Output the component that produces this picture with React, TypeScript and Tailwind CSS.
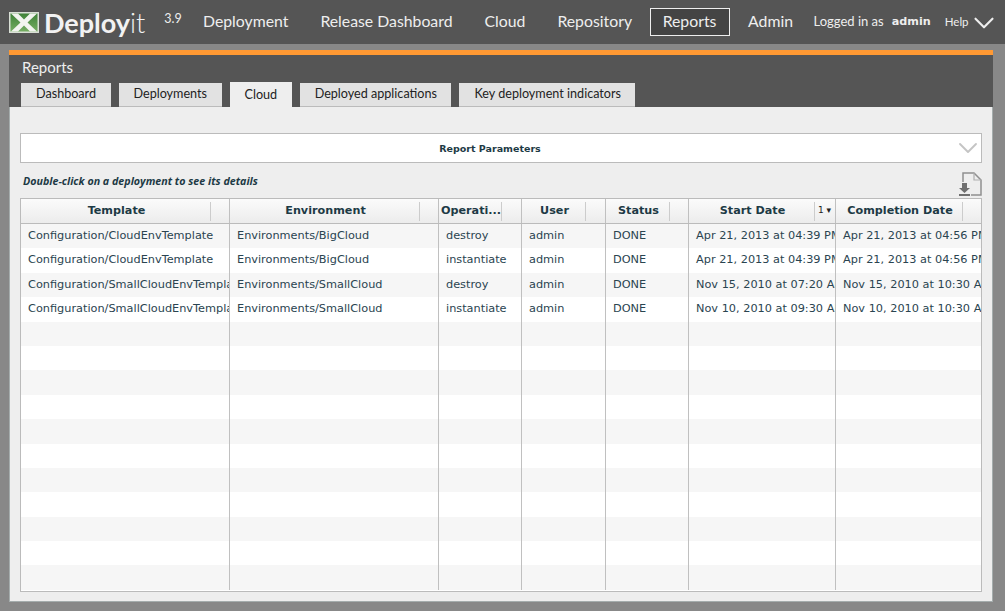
import React from 'react';
import { ChevronDown } from 'lucide-react';

const navItems = [
  { label: 'Deployment', className: 'mr-[32px]' },
  { label: 'Release Dashboard', className: 'mr-[32px]' },
  { label: 'Cloud', className: 'mr-[32px]' },
  { label: 'Repository', className: 'mr-[17.5px]' },
  { label: 'Reports', className: 'mr-[18.5px] flex h-[28px] w-[80px] items-center justify-center border border-[#eeeeee] bg-[#444444]' },
  { label: 'Admin', className: '' },
];
const tabs = ['Dashboard', 'Deployments', 'Cloud', 'Deployed applications', 'Key deployment indicators'];

const columns = [
  { label: 'Template', width: 'w-[209px]', handle: 'w-[190px]' },
  { label: 'Environment', width: 'w-[209px]', handle: 'w-[190px]' },
  { label: 'Operati...', width: 'w-[83px]', handle: 'w-[63px]' },
  { label: 'User', width: 'w-[84px]', handle: 'w-[64px]' },
  { label: 'Status', width: 'w-[83px]', handle: 'w-[64px]' },
  { label: 'Start Date', width: 'w-[147px]', handle: 'w-[126px]' },
  { label: 'Completion Date', width: 'w-[146px]', handle: 'w-[127px]' },
];

const rows = [
  ['Configuration/CloudEnvTemplate', 'Environments/BigCloud', 'destroy', 'admin', 'DONE', 'Apr 21, 2013 at 04:39 PM', 'Apr 21, 2013 at 04:56 PM'],
  ['Configuration/CloudEnvTemplate', 'Environments/BigCloud', 'instantiate', 'admin', 'DONE', 'Apr 21, 2013 at 04:39 PM', 'Apr 21, 2013 at 04:56 PM'],
  ['Configuration/SmallCloudEnvTemplate', 'Environments/SmallCloud', 'destroy', 'admin', 'DONE', 'Nov 15, 2010 at 07:20 AM', 'Nov 15, 2010 at 10:30 AM'],
  ['Configuration/SmallCloudEnvTemplate', 'Environments/SmallCloud', 'instantiate', 'admin', 'DONE', 'Nov 10, 2010 at 09:30 AM', 'Nov 10, 2010 at 10:30 AM'],
  ...Array.from({ length: 11 }, () => ['', '', '', '', '', '', '']),
];

const Logo = () => (
  <svg width="30" height="21" viewBox="0 0 30 21" className="shrink-0">
    <defs>
      <linearGradient id="logoGreen" x1="0" y1="0" x2="0" y2="1">
        <stop offset="0" stopColor="#3f8238" />
        <stop offset="1" stopColor="#75ad62" />
      </linearGradient>
    </defs>
    <rect width="30" height="21" fill="#d9dfd6" />
    <rect x="1.5" y="1.5" width="27" height="18" fill="url(#logoGreen)" />
    <path d="M2 1.5 H9 L15 7.5 L21 1.5 H28 L18.5 10.5 L28 19.5 H21 L15 13.5 L9 19.5 H2 L11.5 10.5 Z" fill="#f2f4ef" />
  </svg>
);

const ExportIcon = () => (
  <svg width="23" height="24" viewBox="0 0 23 24" fill="none">
    <path d="M4 10 V1 H15 L22 8 V23 H12" stroke="#909090" strokeWidth="1.5" />
    <path d="M15 1 V8 H22" stroke="#b0b0b0" strokeWidth="1.2" />
    <path d="M3 11 H8 V16 H11 L5.5 21 L0 16 H3 Z" fill="#6f6f6f" />
    <rect x="0" y="22" width="11" height="2" fill="#6f6f6f" />
  </svg>
);

export default function App() {
  return (
    <div className="h-[611px] w-[1005px] overflow-hidden bg-[#888888] font-['Lato',sans-serif]">
      {/* Top bar */}
      <header className="flex h-[44px] items-center bg-[#555555] text-[#eeeeee]">
        <div className="ml-[9px] flex w-[194px] items-center">
          <Logo />
          <span className="ml-[5px] text-[27px] leading-none font-bold text-[#f2f2f2]">
            Deploy<span className="font-light">it</span>
          </span>
          <span className="ml-[19px] -translate-y-[3px] text-[12.5px]">3.9</span>
        </div>
        <nav className="flex items-center text-[15.8px]">
          {navItems.map((item) => (
            <span key={item.label} className={item.className}>
              <span className="block -translate-y-[1px]">{item.label}</span>
            </span>
          ))}
        </nav>
        <span className="ml-[20.5px] text-[13px]">Logged in as</span>
        <span className="ml-[8px] font-['DejaVu_Sans',sans-serif] text-[11.2px] font-bold">admin</span>
        <span className="ml-[14px] text-[11.5px]">Help</span>
        <ChevronDown size={34} strokeWidth={1.5} className="-my-[8px] ml-[-2px] shrink-0 translate-y-[1px] text-[#eeeeee]" />
      </header>

      {/* Panel */}
      <div className="mx-[9px] mt-[6px] w-[984px]">
        <div className="h-[57px] border-t-[5px] border-[#ff9933] bg-[#555555]">
          <div className="flex h-[25px] items-center pl-[13px] text-[15px] text-[#eeeeee]">Reports</div>
          <div className="flex h-[27px] items-end gap-[8px] pl-[12px]">
            {tabs.map((tab) => (
              <div
                key={tab}
                className={
                  tab === 'Cloud'
                    ? 'flex h-[25px] items-center bg-[#eeeeee] pt-[2px] pr-[14.5px] pl-[15px] text-[12.6px] text-[#222222]'
                    : 'flex h-[24px] items-center border-b border-[#bbbbbb] bg-[#e2e2e2] pr-[14.5px] pl-[15px] text-[12.6px] text-[#222222]'
                }
              >
                {tab}
              </div>
            ))}
          </div>
        </div>

        <div className="h-[495px] border-x border-b border-[#a5adad] bg-[#eeeeee] px-[10px] pt-[26px]">
          <div className="relative flex h-[30px] items-center justify-center border border-[#bbbbbb] bg-white pt-[3px] pr-[22px] font-['DejaVu_Sans',sans-serif] text-[9.5px] font-bold text-[#1d3a45]">
            Report Parameters
            <ChevronDown size={32} strokeWidth={1.4} className="absolute top-[-2.5px] right-[-3px] text-[#c4c4c4]" />
          </div>

          <div className="flex h-[35px] items-start justify-between pt-[9px]">
            <span className="pl-[3px] font-['Open_Sans',sans-serif] text-[10.7px] leading-[18px] font-bold text-[#1d3a45] italic">
              Double-click on a deployment to see its details
            </span>
            <ExportIcon />
          </div>

          {/* Table */}
          <div className="h-[394px] overflow-hidden border border-[#bbbbbb] bg-white">
            <div className="flex h-[25px] border-b border-[#bbbbbb] bg-gradient-to-b from-[#fbfbfb] to-[#ececec]">
              {columns.map((col, i) => (
                <div
                  key={col.label}
                  className={`${col.width} relative flex shrink-0 items-center border-r border-[#c0c0c0] last:border-r-0`}
                >
                  <div className={`${col.handle} flex h-[19px] items-center justify-center border-r border-[#cccccc] pt-[1px] pl-[2px] font-['DejaVu_Sans',sans-serif] text-[11.2px] font-bold text-[#1d3a45]`}>
                    {col.label}
                  </div>
                  {i === 5 && (
                    <span className="ml-[3px] font-['DejaVu_Sans',sans-serif] text-[9px] whitespace-nowrap text-[#222222]">1 ▾</span>
                  )}
                </div>
              ))}
            </div>
            {rows.map((row, r) => (
              <div key={r} className={`flex h-[24.4px] ${r % 2 === 0 ? 'bg-[#f6f6f6]' : 'bg-white'}`}>
                {row.map((cell, c) => (
                  <div
                    key={c}
                    className={`${columns[c].width} flex shrink-0 items-center overflow-hidden border-r border-[#c0c0c0] pl-[7px] font-['DejaVu_Sans',sans-serif] text-[11.3px] whitespace-nowrap text-[#2a4450] last:border-r-0`}
                  >
                    {cell}
                  </div>
                ))}
              </div>
            ))}
          </div>
        </div>
      </div>
    </div>
  );
}
